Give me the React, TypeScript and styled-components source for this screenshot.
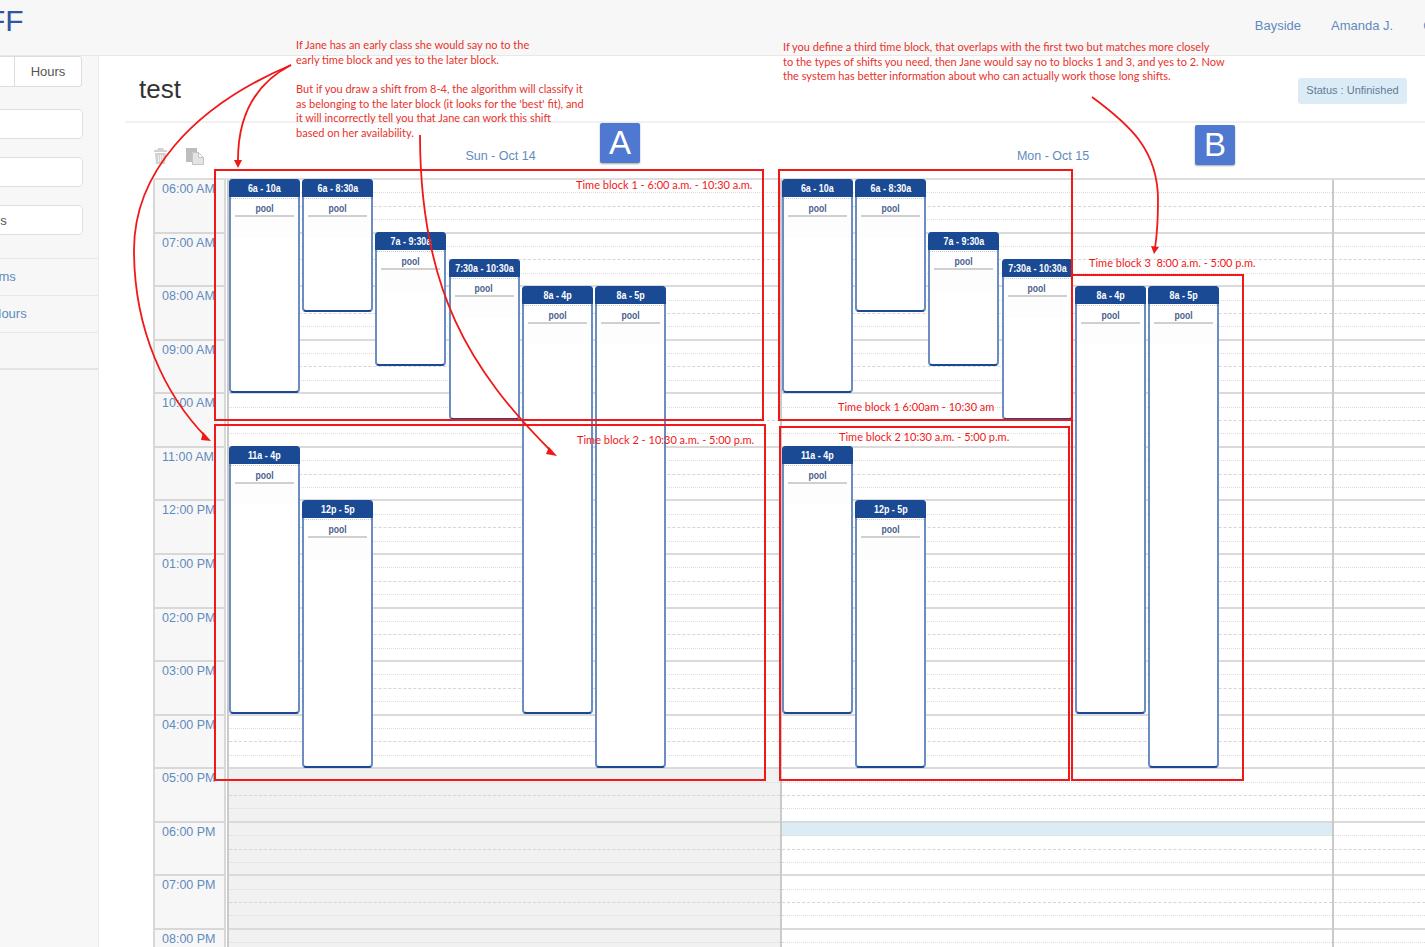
import styled, { createGlobalStyle } from "styled-components";

const HOUR = 53.57;
const SANS = `"Liberation Sans", Arial, sans-serif`;
const LINK = "#5f8bbd";
const NAVY = "#1a4a94";
const RED = "#f01818";

const GlobalStyle = createGlobalStyle`
  html, body {
    margin: 0;
    padding: 0;
    background: #fff;
  }
  * {
    box-sizing: border-box;
  }
`;

const Page = styled.div`
  position: relative;
  width: 1425px;
  height: 947px;
  overflow: hidden;
  background: #fff;
  font-family: ${SANS};
`;

const TopBar = styled.header`
  display: flex;
  justify-content: space-between;
  align-items: flex-start;
  height: 56px;
  background: #f7f7f7;
  border-bottom: 1px solid #e8e8e8;
  overflow: hidden;
`;

const Logo = styled.div`
  margin: 3px 0 0 -13px;
  font-size: 30px;
  line-height: 36px;
  color: #2f55a4;
`;

const UserNav = styled.nav`
  display: flex;
  gap: 30px;
  margin-right: -43px;
  padding-top: 18px;
  font-size: 13px;
  line-height: 16px;
  color: ${LINK};
`;

const Body = styled.div`
  display: flex;
  height: 891px;
`;

const Sidebar = styled.aside`
  flex: none;
  width: 99px;
  height: 100%;
  background: #f7f7f7;
  border-right: 1px solid #ececec;
  overflow: hidden;
`;

const Tabs = styled.div`
  display: flex;
  justify-content: flex-end;
  height: 31px;
  margin: 0 16px 22px -40px;
  background: #fff;
  border: 1px solid #ddd;
  border-radius: 3px;
`;

const Tab = styled.div`
  width: 67px;
  border-left: 1px solid #ddd;
  font-size: 13px;
  line-height: 29px;
  text-align: center;
  color: #555;
`;

const Fields = styled.div`
  display: flex;
  flex-direction: column;
  gap: 18px;
  margin: 0 15px 0 -60px;
`;

const Field = styled.div`
  height: 30px;
  padding: 2px 0 0 13px;
  background: #fff;
  border: 1px solid #e0e0e0;
  border-radius: 4px;
  font-size: 13px;
  line-height: 26px;
  color: #555;
`;

const SideNav = styled.div`
  margin-top: 23px;
  border-top: 1px solid #e8e8e8;
`;

const SideItem = styled.div<{ $shift: number }>`
  height: 37px;
  margin-left: ${(p) => p.$shift}px;
  border-bottom: 1px solid #e8e8e8;
  font-size: 13px;
  line-height: 36px;
  color: ${LINK};

  &:last-child {
    border-bottom: 2px solid #e4e4e4;
  }
`;

const Main = styled.main`
  flex: 1;
  min-width: 0;
`;

const TitleRow = styled.div`
  display: flex;
  justify-content: space-between;
  align-items: center;
  height: 67px;
  margin-left: 26px;
  padding: 2px 18px 0 14px;
  border-bottom: 2px solid #f1f1f1;
`;

const Title = styled.h1`
  margin: 0;
  font-size: 26px;
  font-weight: 400;
  color: #333;
`;

const Status = styled.div`
  width: 109px;
  height: 26px;
  margin-top: 2px;
  background: #dcecf6;
  border-radius: 3px;
  font-size: 11px;
  line-height: 25px;
  text-align: center;
  color: #5e7d96;
`;

const Columns = styled.div`
  display: grid;
  grid-template-columns: 74px 553px 552px 1fr;
  margin-left: 54px;
`;

const HeadRow = styled(Columns)`
  height: 55px;
`;

const Tools = styled.div`
  display: flex;
  align-items: flex-start;
  gap: 18px;
  padding-top: 24px;
`;

const DayHead = styled.div<{ $inset: number }>`
  padding: 26px ${(p) => p.$inset}px 0 0;
  font-size: 12.5px;
  line-height: 15px;
  text-align: center;
  color: ${LINK};
`;

const GridRow = styled(Columns)`
  border-top: 2px solid #ddd;
`;

const TimeColumn = styled.div`
  margin-right: 1px;
  background: #f7f7f7;
  border-left: 2px solid #d8d8d8;
  border-right: 2px solid #d8d8d8;
`;

const TimeCell = styled.div`
  height: ${HOUR}px;
  padding: 1px 0 0 7px;
  border-bottom: 2px solid #d8d8d8;
  font-size: 12.5px;
  line-height: 16px;
  white-space: nowrap;
  overflow: hidden;
  color: ${LINK};
`;

const DayColumn = styled.div`
  position: relative;
  border-left: 2px solid #cacaca;
`;

const HourSlot = styled.div<{ $off?: boolean }>`
  height: ${HOUR}px;
  background: ${(p) => (p.$off ? "#f1f1f1" : "#fff")};
  border-bottom: 2px solid #dadada;
`;

const QuarterSlot = styled.div<{ $mid?: boolean; $tint?: boolean }>`
  height: 13.4px;
  background: ${(p) => (p.$tint ? "#dbecf5" : "transparent")};
  border-bottom: 1px ${(p) => (p.$mid ? "dashed #d6d6d6" : "dotted #dcdcdc")};
`;

const Shift = styled.div<{ $col: number; $start: number; $end: number }>`
  position: absolute;
  top: ${(p) => (p.$start - 6) * HOUR - 1.5}px;
  left: ${(p) => p.$col * 73.2}px;
  width: 71px;
  height: ${(p) => (p.$end - p.$start) * HOUR}px;
  background: #fff;
  border: 2px solid #6b8dc2;
  border-bottom: 2px solid ${NAVY};
  border-radius: 4px;
`;

const ShiftHead = styled.div`
  height: 18px;
  margin: -2px -2px 0;
  background: ${NAVY};
  border-radius: 4px 4px 0 0;
  font-size: 10.5px;
  font-weight: 700;
  line-height: 18px;
  text-align: center;
  white-space: nowrap;
  color: #fff;
`;

const ShiftTime = styled.span`
  display: inline-block;
  transform: scaleX(0.85);
`;

const ShiftBody = styled.div`
  height: 40px;
  margin-top: 1px;
  border-top: 1px dotted #ccc;
  background: linear-gradient(#fff 0 18px, #fdfdfd 18px 100%);
`;

const ShiftLabel = styled.div`
  height: 18px;
  margin: 0 4px;
  padding-top: 3px;
  border-bottom: 2px solid #d0d0d0;
  font-size: 11px;
  font-weight: 700;
  line-height: 12px;
  text-align: center;
  color: #4c628c;
`;

const PoolName = styled.span`
  display: inline-block;
  transform: scaleX(0.78);
`;

const Overlay = styled.div`
  position: absolute;
  inset: 0;
  pointer-events: none;
`;

const Note = styled.p<{ $x: number; $y: number }>`
  position: absolute;
  top: ${(p) => p.$y}px;
  left: ${(p) => p.$x}px;
  margin: 0;
  font-family: Lato, "Open Sans", sans-serif;
  font-size: 11px;
  line-height: 14.6px;
  white-space: pre;
  color: #e8322c;
`;

const BlockLabel = styled(Note)`
  color: ${RED};
`;

const Block = styled.div<{ $x: number; $y: number; $w: number; $h: number }>`
  position: absolute;
  top: ${(p) => p.$y}px;
  left: ${(p) => p.$x}px;
  width: ${(p) => p.$w}px;
  height: ${(p) => p.$h}px;
  border: 2px solid ${RED};
`;

const Badge = styled.div<{ $x: number; $y: number }>`
  position: absolute;
  top: ${(p) => p.$y}px;
  left: ${(p) => p.$x}px;
  width: 40px;
  height: 40px;
  background: #4f78d0;
  border-radius: 2px;
  box-shadow: 0 1px 2px rgba(0, 0, 0, 0.35);
  font-size: 33px;
  line-height: 40px;
  text-align: center;
  color: #fff;
`;

const Arrows = styled.svg`
  position: absolute;
  top: 0;
  left: 0;
`;

const hours = [
  "06:00 AM", "07:00 AM", "08:00 AM", "09:00 AM", "10:00 AM",
  "11:00 AM", "12:00 PM", "01:00 PM", "02:00 PM", "03:00 PM",
  "04:00 PM", "05:00 PM", "06:00 PM", "07:00 PM", "08:00 PM",
];

const shifts = [
  { label: "6a - 10a", col: 0, start: 6, end: 10 },
  { label: "6a - 8:30a", col: 1, start: 6, end: 8.5 },
  { label: "7a - 9:30a", col: 2, start: 7, end: 9.5 },
  { label: "7:30a - 10:30a", col: 3, start: 7.5, end: 10.5 },
  { label: "8a - 4p", col: 4, start: 8, end: 16 },
  { label: "8a - 5p", col: 5, start: 8, end: 17 },
  { label: "11a - 4p", col: 0, start: 11, end: 16 },
  { label: "12p - 5p", col: 1, start: 12, end: 17 },
];

function TrashIcon() {
  return (
    <svg width="15" height="18" viewBox="0 0 15 18">
      <path fill="#d2d2d2" d="M5 1h5l1 2h3v2H1V3h3zM2 6h11l-1 11H3z" />
      <path stroke="#f2f2f2" strokeWidth="1" d="M5.500 8v7M7.500 8v7M9.500 8v7" />
    </svg>
  );
}

function CopyIcon() {
  return (
    <svg width="18" height="18" viewBox="0 0 18 18">
      <path fill="#bdbdbd" d="M0 1h11v4H6v10H0z" />
      <path fill="#e4e4e4" stroke="#c4c4c4" d="M6.500 5.500h6l5 5v7h-11z" />
      <path fill="#fff" stroke="#c4c4c4" d="M12.500 5.500v5h5z" />
    </svg>
  );
}

function Day({ offDay, tintHour, hasShifts }: { offDay?: boolean; tintHour?: number; hasShifts?: boolean }) {
  return (
    <DayColumn>
      {hours.map((h, i) => (
        <HourSlot key={h} $off={offDay && i >= 11}>
          <QuarterSlot $tint={tintHour === i} />
          <QuarterSlot $mid />
          <QuarterSlot />
        </HourSlot>
      ))}
      {hasShifts &&
        shifts.map((s) => (
          <Shift key={s.label} $col={s.col} $start={s.start} $end={s.end}>
            <ShiftHead>
              <ShiftTime>{s.label}</ShiftTime>
            </ShiftHead>
            <ShiftBody>
              <ShiftLabel>
                <PoolName>pool</PoolName>
              </ShiftLabel>
            </ShiftBody>
          </Shift>
        ))}
    </DayColumn>
  );
}

export default function App() {
  return (
    <Page>
      <GlobalStyle />
      <TopBar>
        <Logo>FF</Logo>
        <UserNav>
          <span>Bayside</span>
          <span>Amanda J.</span>
          <span>Contact</span>
        </UserNav>
      </TopBar>
      <Body>
        <Sidebar>
          <Tabs>
            <Tab>Hours</Tab>
          </Tabs>
          <Fields>
            <Field />
            <Field />
            <Field>Positions</Field>
          </Fields>
          <SideNav>
            <SideItem $shift={-16}>Items</SideItem>
            <SideItem $shift={-8}>Hours</SideItem>
            <SideItem $shift={0} />
          </SideNav>
        </Sidebar>
        <Main>
          <TitleRow>
            <Title>test</Title>
            <Status>Status : Unfinished</Status>
          </TitleRow>
          <HeadRow>
            <Tools>
              <TrashIcon />
              <CopyIcon />
            </Tools>
            <DayHead $inset={6}>Sun - Oct 14</DayHead>
            <DayHead $inset={6}>Mon - Oct 15</DayHead>
          </HeadRow>
          <GridRow>
            <TimeColumn>
              {hours.map((h) => (
                <TimeCell key={h}>{h}</TimeCell>
              ))}
            </TimeColumn>
            <Day offDay hasShifts />
            <Day tintHour={12} hasShifts />
            <Day />
          </GridRow>
        </Main>
      </Body>
      <Overlay>
        <Note $x={296} $y={38}>{"If Jane has an early class she would say no to the\nearly time block and yes to the later block."}</Note>
        <Note $x={296} $y={82}>{"But if you draw a shift from 8-4, the algorithm will classify it\nas belonging to the later block (it looks for the 'best' fit), and\nit will incorrectly tell you that Jane can work this shift\nbased on her availability."}</Note>
        <Note $x={783} $y={40}>{"If you define a third time block, that overlaps with the first two but matches more closely\nto the types of shifts you need, then Jane would say no to blocks 1 and 3, and yes to 2. Now\nthe system has better information about who can actually work those long shifts."}</Note>
        <Badge $x={600} $y={123}>A</Badge>
        <Badge $x={1195} $y={125}>B</Badge>
        <Block $x={214} $y={169} $w={550} $h={252} />
        <Block $x={214} $y={424} $w={552} $h={357} />
        <Block $x={778} $y={169} $w={295} $h={252} />
        <Block $x={779} $y={426} $w={291} $h={355} />
        <Block $x={1071} $y={274} $w={173} $h={507} />
        <BlockLabel $x={576} $y={178}>Time block 1 - 6:00 a.m. - 10:30 a.m.</BlockLabel>
        <BlockLabel $x={577} $y={433}>Time block 2 - 10:30 a.m. - 5:00 p.m.</BlockLabel>
        <BlockLabel $x={838} $y={400}>Time block 1 6:00am - 10:30 am</BlockLabel>
        <BlockLabel $x={839} $y={430}>Time block 2 10:30 a.m. - 5:00 p.m.</BlockLabel>
        <BlockLabel $x={1089} $y={256}>Time block 3  8:00 a.m. - 5:00 p.m.</BlockLabel>
        <Arrows width="1425" height="947" viewBox="0 0 1425 947" fill="none" stroke={RED} strokeWidth="1.8">
          <path d="M291 65C258 82 238 112 238 160" />
          <path d="M291 65C190 108 134 175 134 250C134 330 165 395 206 437" />
          <path d="M420 135C420 290 470 370 552 452" />
          <path d="M1092 97C1130 125 1158 150 1158 200C1158 225 1157 235 1155 248" />
          <path fill={RED} stroke="none" d="M234 160h8l-4 8zM203 432l8 9-10-1zM549 447l8 9-11-2zM1151 246l8 1-5 7z" />
        </Arrows>
      </Overlay>
    </Page>
  );
}
